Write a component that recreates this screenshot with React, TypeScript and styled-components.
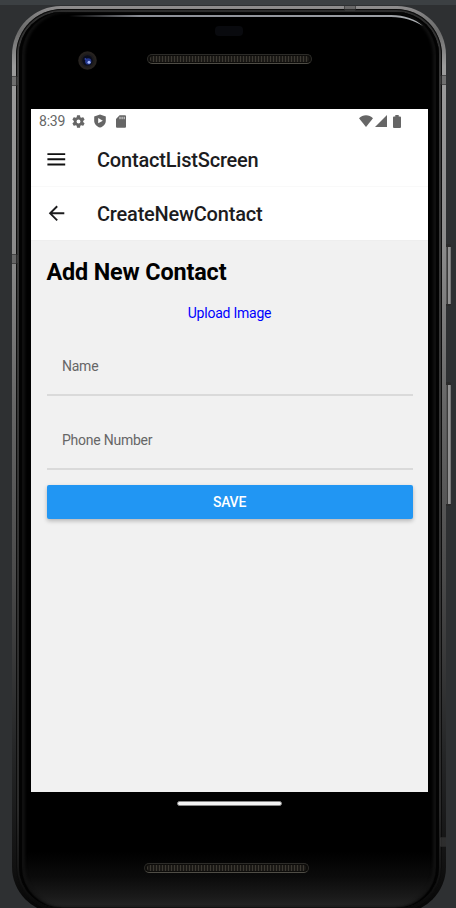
import React from "react";
import styled, { createGlobalStyle } from "styled-components";

const GlobalStyle = createGlobalStyle`
  * { box-sizing: border-box; }
  body { margin: 0; background: #2e3032; font-family: Roboto, "Liberation Sans", sans-serif; }
`;

const Stage = styled.main`
  position: relative;
  width: 456px;
  height: 908px;
  overflow: hidden;
  background: #2e3032;
`;

const WindowStrip = styled.div`
  height: 5px;
  background: #3c4043;
`;

const Phone = styled.div`
  position: relative;
  width: 434px;
  height: 907px;
  margin: 1px 0 0 12px;
  padding: 3px 4px 2px;
  border-radius: 49px 49px 46px 46px;
  background: linear-gradient(180deg, #8f8d8e 0, #777 14px, #6c6c6c 26px, #9b9b9b 60px, #8b8b8b 240px, #666 400px, #4a4a4a 570px, #262728 740px, #111 860px, #050505 100%);
`;

const Rim = styled.div`
  height: 100%;
  padding: 3px;
  border-radius: 46px 46px 44px 44px;
  background: linear-gradient(180deg, #2c2c2c 0, #3a3a3a 60px, #363636 400px, #2a2a2a 800px, #080808 100%);
  box-shadow: inset 0 0 0 1px #0c0c0c;
`;

const Body = styled.div`
  position: relative;
  display: flex;
  flex-direction: column;
  height: 100%;
  padding: 0 11px 0 12px;
  border-radius: 43px 43px 41px 41px;
  background: linear-gradient(180deg, #000 0, #000 840px, #0b0b0b 865px, #1a1a1a 885px, #252525 100%);
  box-shadow: inset 3px 0 1px #030303, inset -3px 0 1px #030303,
    inset 6px 0 3px #121212, inset -6px 0 3px #121212;
`;

const GlareSlot = styled.div`
  position: absolute;
  top: 0;
  left: 50px;
  width: 360px;
  height: 20px;
  svg { display: block; }
`;

const TopBezel = styled.div`
  position: relative;
  height: 97px;
  flex: none;
`;

const Sensor = styled.div`
  position: absolute;
  left: 184px;
  top: 14px;
  width: 28px;
  height: 10px;
  border-radius: 4px;
  background: #090a0e;
`;

const CameraSlot = styled.div`
  position: absolute;
  left: 47px;
  top: 39px;
  width: 19px;
  height: 19px;
  svg { display: block; }
`;

const Grille = styled.div<{ $x: number; $y: number }>`
  position: absolute;
  left: ${(p) => p.$x}px;
  top: ${(p) => p.$y}px;
  width: 165px;
  height: 10px;
  border: 1px solid #2c2b28;
  border-bottom-color: #4f4d46;
  border-radius: 5px;
  padding: 1px 2px;
  background: #0d0c0a;
  &::after {
    content: "";
    display: block;
    height: 6px;
    border-radius: 3px;
    background: repeating-linear-gradient(90deg, #3c3932 0 1px, #1b1916 1px 3px);
  }
`;

const Screen = styled.section`
  height: 683px;
  width: 397px;
  flex: none;
  display: flex;
  flex-direction: column;
  background: #f1f1f1;
`;

const StatusBar = styled.div`
  display: flex;
  align-items: center;
  justify-content: space-between;
  height: 24px;
  padding: 0 27px 0 8px;
  background: #fff;
  color: #666;
  font-size: 14px;
  line-height: 24px;
`;

const StatusGroup = styled.div<{ $gap: number }>`
  display: flex;
  align-items: center;
  gap: ${(p) => p.$gap}px;
  height: 24px;
  svg { display: block; }
`;

const Clock = styled.span`
  width: 27px;
  margin-right: -4px;
  letter-spacing: -0.2px;
  white-space: nowrap;
`;

const AppBar = styled.header<{ $height: number; $lined?: boolean }>`
  display: flex;
  align-items: center;
  gap: 31px;
  height: ${(p) => p.$height}px;
  padding-left: 15px;
  background: #fff;
  border-bottom: ${(p) => (p.$lined ? "1px solid #f9f9f9" : "0")};
  svg { display: block; }
`;

const Title = styled.h1`
  margin: 0;
  color: #1c1c1e;
  font-size: 20px;
  letter-spacing: -0.2px;
  line-height: 24px;
  font-weight: 500;
`;

const Form = styled.form`
  display: flex;
  flex-direction: column;
  flex: 1;
  padding: 16px 15.5px 0;
  border-top: 1px solid #eee;
`;

const Heading = styled.h2`
  margin: 0;
  color: #000;
  font-size: 23.4px;
  letter-spacing: -0.15px;
  line-height: 30px;
  font-weight: 700;
`;

const UploadLink = styled.a`
  align-self: center;
  margin-top: 17px;
  color: #00f;
  font-size: 14px;
  letter-spacing: -0.24px;
  line-height: 18px;
`;

const Field = styled.label<{ $height: number }>`
  display: flex;
  align-items: center;
  height: ${(p) => p.$height}px;
  padding: 0 15.5px;
  border-bottom: 2px solid #dadada;
  color: #666;
  font-size: 14px;
  letter-spacing: -0.24px;
  line-height: 18px;
`;

const Fields = styled.div`
  display: flex;
  flex-direction: column;
  gap: 16px;
  margin-top: 16px;
`;

const SaveButton = styled.button`
  margin-top: 15px;
  height: 34px;
  border: 0;
  border-radius: 2px;
  background: #2196f3;
  color: #fff;
  font: 500 14px/34px Roboto, sans-serif;
  letter-spacing: -0.25px;
  padding: 0;
  box-shadow: 0 2px 4px rgba(0, 0, 0, 0.25);
`;

const BottomBezel = styled.div`
  position: relative;
  flex: 1;
`;

const HomePill = styled.div`
  position: absolute;
  left: 146px;
  top: 9px;
  width: 105px;
  height: 5px;
  border: 1px solid #888;
  border-radius: 3px;
  background: #f4f4f4;
`;

const SideButton = styled.div<{ $y: number; $height: number }>`
  position: absolute;
  left: 434px;
  top: ${(p) => p.$y}px;
  width: 5px;
  height: ${(p) => p.$height}px;
  border: solid #2a2a2a;
  border-width: 3px 0 2px;
  border-radius: 0 2px 2px 0;
  background: linear-gradient(90deg, #555 0 1px, #3a3a3a 1px 2px, #929292 2px 4px, #777 4px);
`;

const Antenna = styled.div<{ $x: number; $y: number; $wide?: boolean }>`
  position: absolute;
  left: ${(p) => p.$x}px;
  top: ${(p) => p.$y}px;
  width: ${(p) => (p.$wide ? 12 : 6)}px;
  height: ${(p) => (p.$wide ? 5 : 10)}px;
  background: rgba(70, 70, 70, 0.5);
  border: solid rgba(30, 30, 30, 0.45);
  border-width: ${(p) => (p.$wide ? "0 1px" : "1px 0")};
`;

const Glare = () => (
  <svg width="360" height="20" viewBox="0 0 360 20">
    <defs>
      <linearGradient id="glare" x1="0" x2="1">
        <stop offset="0" stopColor="#8b8e96" stopOpacity="0" />
        <stop offset=".2" stopColor="#8b8e96" />
        <stop offset=".9" stopColor="#9b9ea4" />
        <stop offset="1" stopColor="#b4b8ba" />
      </linearGradient>
    </defs>
    <path d="M0 3H322C336 3 346 7 354 14C344 8.500 336 5 322 5H0z" fill="url(#glare)" />
  </svg>
);

const Camera = () => (
  <svg width="19" height="19" viewBox="0 0 19 19">
    <circle cx="9.5" cy="9.5" r="9.3" fill="#26221f" />
    <circle cx="9.5" cy="9.5" r="7" fill="#1e1c1d" />
    <circle cx="9.5" cy="9.5" r="5.2" fill="#0a0d1c" />
    <circle cx="10.2" cy="10.4" r="3.1" fill="#23378f" />
    <circle cx="7.4" cy="8" r=".9" fill="#3144a8" />
    <circle cx="11" cy="11.3" r="1.5" fill="#a9bcff" />
  </svg>
);

const GearIcon = () => (
  <svg width="13" height="13" viewBox="2 2 20 20" fill="#666">
    <path d="M19.14 12.94c.04-.3.06-.61.06-.94s-.02-.64-.07-.94l2.03-1.58a.49.49 0 0 0 .12-.61l-1.92-3.32a.49.49 0 0 0-.59-.22l-2.39.96a7 7 0 0 0-1.62-.94l-.36-2.54a.48.48 0 0 0-.48-.41h-3.84a.48.48 0 0 0-.47.41l-.36 2.54c-.59.24-1.13.57-1.62.94l-2.39-.96a.49.49 0 0 0-.59.22L2.74 8.87a.49.49 0 0 0 .12.61l2.03 1.58a6 6 0 0 0 0 1.88l-2.03 1.58a.49.49 0 0 0-.12.61l1.92 3.32c.12.22.37.29.59.22l2.39-.96c.5.38 1.03.7 1.62.94l.36 2.54c.05.24.24.41.48.41h3.84c.24 0 .44-.17.47-.41l.36-2.54a7 7 0 0 0 1.62-.94l2.39.96c.22.08.47 0 .59-.22l1.92-3.32a.49.49 0 0 0-.12-.61zM12 15a3 3 0 1 1 0-6 3 3 0 0 1 0 6z" />
  </svg>
);

const ShieldIcon = () => (
  <svg width="12" height="14" viewBox="0 0 12 14">
    <path d="M6 .4 11.8 2.5v4.2c0 3.1-2.3 5.8-5.8 6.9C2.5 12.500.2 9.800.2 6.700V2.500z" fill="#666" />
    <path d="M4.200 4.100v5.200L8.800 6.700z" fill="#fff" />
  </svg>
);

const CardIcon = () => (
  <svg width="10" height="13" viewBox="0 0 10 13">
    <path d="M3.600.3H9a1 1 0 0 1 1 1v10.500a1 1 0 0 1-1 1H1a1 1 0 0 1-1-1V4z" fill="#666" />
    <path d="M4 1.800v2.400M6.100 1.800v2.400M8.200 1.800v2.400" stroke="#fff" strokeWidth=".8" />
  </svg>
);

const WifiIcon = () => (
  <svg width="14" height="12" viewBox="0 0 14 12">
    <path d="M7 12 0 3.200C3.700-.7 10.300-.7 14 3.200z" fill="#666" />
  </svg>
);

const SignalIcon = () => (
  <svg width="12" height="12" viewBox="0 0 12 12">
    <path d="M12 0v12H0z" fill="#666" />
  </svg>
);

const BatteryIcon = () => (
  <svg width="8" height="13" viewBox="0 0 8 13">
    <path d="M2.300 0h3.400v1.400H7a1 1 0 0 1 1 1V12a1 1 0 0 1-1 1H1a1 1 0 0 1-1-1V2.400a1 1 0 0 1 1-1h1.300z" fill="#666" />
  </svg>
);

const Battery = styled.span`
  margin-left: 4px;
`;

const MenuIcon = () => (
  <svg width="20" height="20" viewBox="0 0 20 20" stroke="#111" strokeWidth="1.900">
    <path d="M1.400 4.100h17.800M1.400 9.300h17.800M1.400 14.500h17.800" />
  </svg>
);

const BackIcon = () => (
  <svg width="20" height="20" viewBox="0 0 20 20" fill="none" stroke="#1c1c1e" strokeWidth="1.900">
    <path d="M18.300 9.300H4M11.200 2.300 4.100 9.300l7.100 7.100" />
  </svg>
);

export default function App() {
  return (
    <>
      <GlobalStyle />
      <Stage>
        <WindowStrip />
        <Phone>
          <Rim>
            <Body>
              <GlareSlot><Glare /></GlareSlot>
              <TopBezel>
                <Sensor />
                <CameraSlot><Camera /></CameraSlot>
                <Grille $x={116} $y={42} />
              </TopBezel>
              <Screen>
                <StatusBar>
                  <StatusGroup $gap={9.5}>
                    <Clock>8:39</Clock>
                    <GearIcon />
                    <ShieldIcon />
                    <CardIcon />
                  </StatusGroup>
                  <StatusGroup $gap={2}>
                    <WifiIcon />
                    <SignalIcon />
                    <Battery><BatteryIcon /></Battery>
                  </StatusGroup>
                </StatusBar>
                <AppBar $height={54} $lined>
                  <MenuIcon />
                  <Title>ContactListScreen</Title>
                </AppBar>
                <AppBar $height={53}>
                  <BackIcon />
                  <Title>CreateNewContact</Title>
                </AppBar>
                <Form>
                  <Heading>Add New Contact</Heading>
                  <UploadLink>Upload Image</UploadLink>
                  <Fields>
                    <Field $height={58}>Name</Field>
                    <Field $height={58}>Phone Number</Field>
                  </Fields>
                  <SaveButton type="button">SAVE</SaveButton>
                </Form>
              </Screen>
              <BottomBezel>
                <HomePill />
                <Grille $x={113} $y={71} />
              </BottomBezel>
            </Body>
          </Rim>
          <SideButton $y={238} $height={62} />
          <SideButton $y={376} $height={124} />
          <Antenna $x={0} $y={70} />
          <Antenna $x={0} $y={248} />
          <Antenna $x={428} $y={69} />
          <Antenna $x={428} $y={831} />
          <Antenna $x={332} $y={0} $wide />
        </Phone>
      </Stage>
    </>
  );
}
